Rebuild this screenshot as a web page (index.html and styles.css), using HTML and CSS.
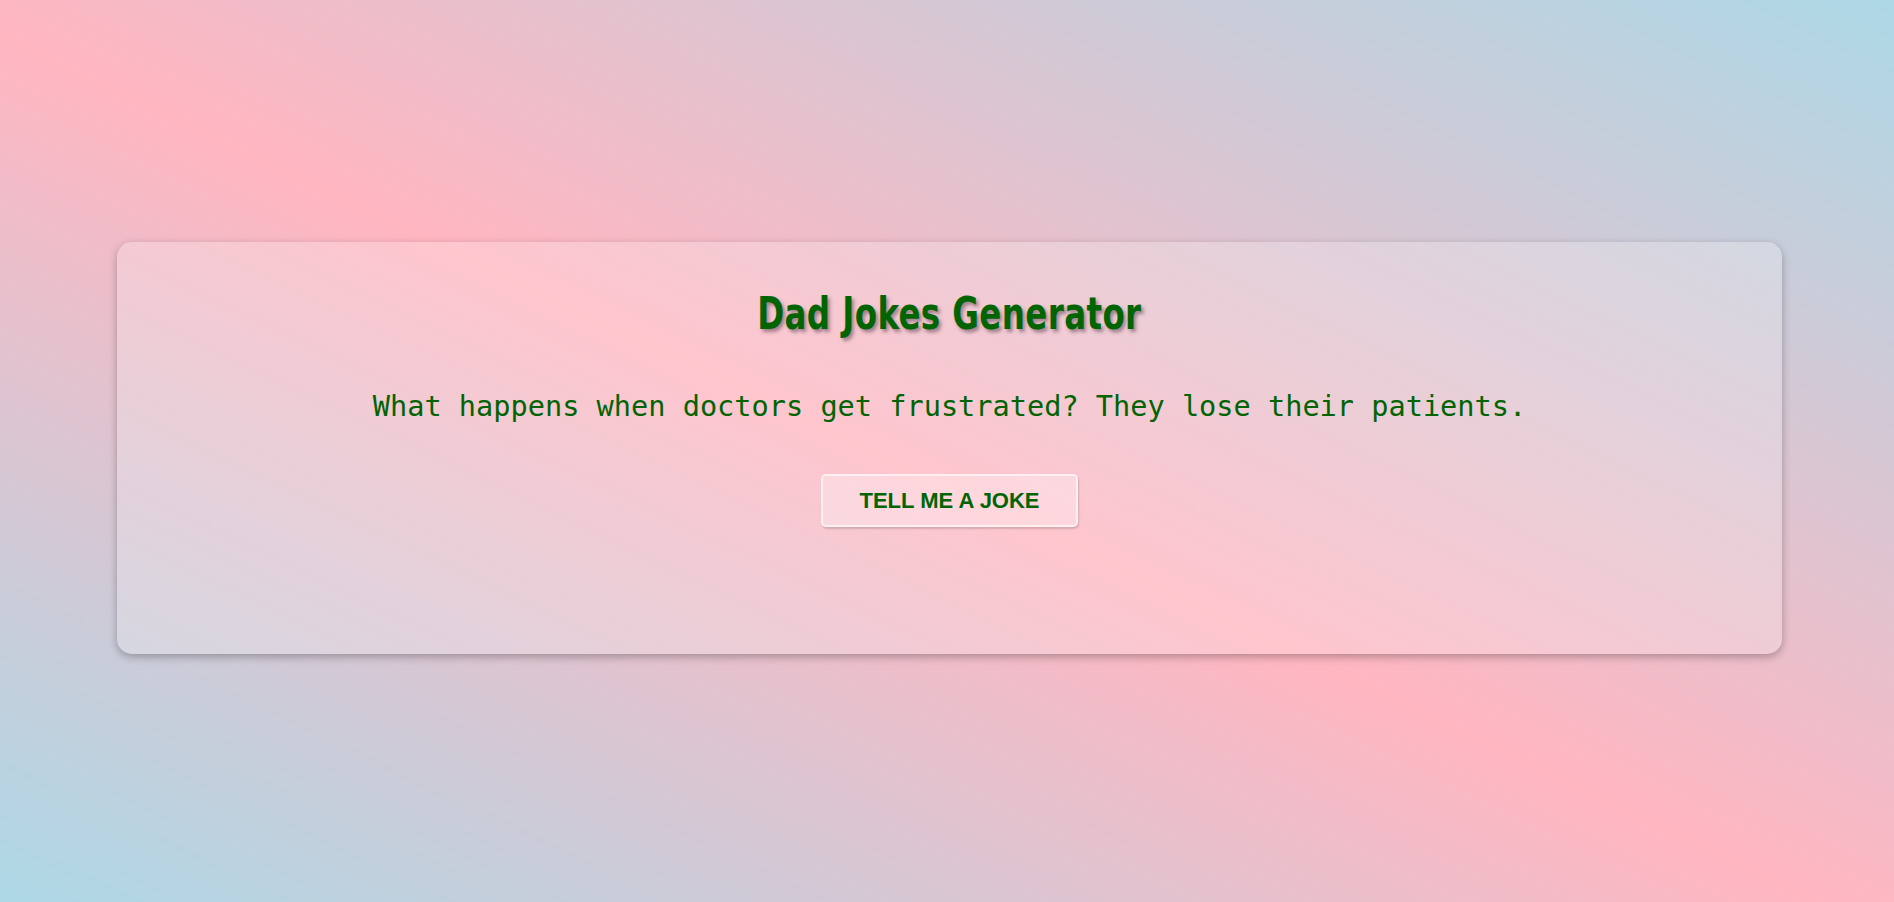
FILE: index.html
```html
<!DOCTYPE html>
<html lang="en">
<head>
<meta charset="UTF-8">
<title>Dad Jokes Generator</title>
<link rel="stylesheet" href="styles.css">
</head>
<body>
  <main class="card">
    <h1 class="title">Dad Jokes Generator</h1>
    <p class="joke">What happens when doctors get frustrated? They lose their patients.</p>
    <button class="joke-btn" type="button">TELL ME A JOKE</button>
  </main>
</body>
</html>
```

FILE: styles.css
```css
html, body {
  height: 100%;
}

body {
  margin: 0;
  min-height: 100vh;
  display: flex;
  align-items: center;
  padding-bottom: 6px;
  box-sizing: border-box;
  background: linear-gradient(to top right, #add8e6 0%, #ffb6c1 48%, #add8e6 100%);
}

.card {
  flex: 1;
  margin: 0 112px 0 117px;
  padding: 50px 40px 127px;
  display: flex;
  flex-direction: column;
  align-items: center;
  background: rgba(255, 255, 255, 0.22);
  border-radius: 15px;
  box-shadow: 0 3px 8px rgba(0, 0, 0, 0.28);
}

.title {
  margin: 0;
  font-family: "DejaVu Sans Condensed", "Liberation Sans", sans-serif;
  font-weight: bold;
  font-size: 44px;
  line-height: 43px;
  letter-spacing: 0.5px;
  color: #006400;
  text-shadow: 3px 3px 4px rgba(80, 55, 70, 0.5);
  transform: scaleX(0.82);
}

.joke {
  margin: 55px 0 0;
  font-family: "DejaVu Sans Mono", "Liberation Mono", monospace;
  font-size: 28.6px;
  line-height: 33px;
  color: #006400;
  text-align: center;
}

.joke-btn {
  margin-top: 51px;
  padding: 12px 36px;
  font-family: "Liberation Sans", Arial, sans-serif;
  font-weight: bold;
  font-size: 22px;
  line-height: 25px;
  color: #006400;
  background: rgba(255, 255, 255, 0.3);
  border: 2px solid rgba(255, 255, 255, 0.6);
  border-radius: 5px;
  box-shadow: 1px 2px 2px rgba(0, 0, 0, 0.15);
  cursor: pointer;
}
```
